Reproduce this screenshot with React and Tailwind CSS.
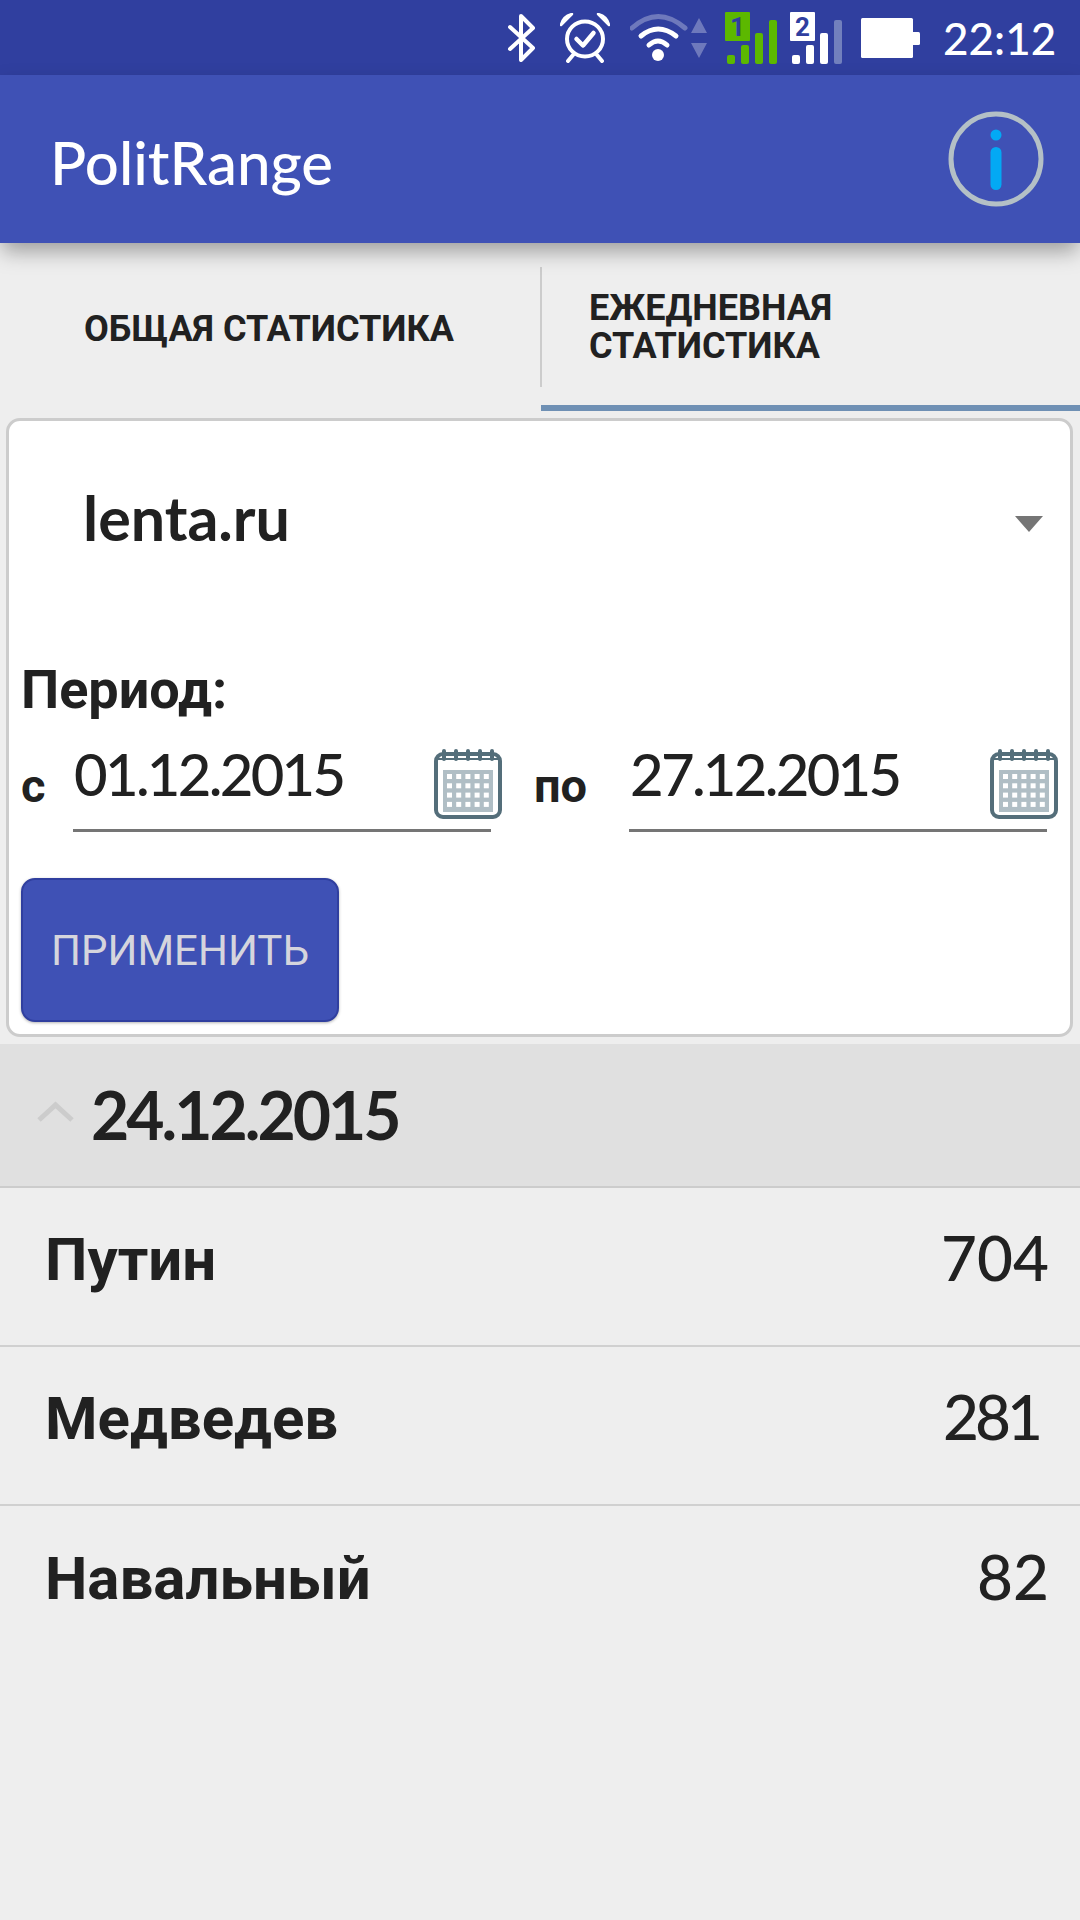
import React from "react";

const BluetoothIcon = () => (
  <svg width="29" height="48" viewBox="0 0 29 48" fill="none" stroke="white" strokeWidth="4" strokeLinecap="round" strokeLinejoin="round">
    <path d="M3 13 L26 34 L14 46 V2 L26 14 L3 35" />
  </svg>
);

const AlarmIcon = () => (
  <svg width="50" height="50" viewBox="0 0 50 50" fill="none" stroke="white" strokeLinecap="round" strokeLinejoin="round">
    <ellipse cx="25" cy="26" rx="18" ry="17.5" strokeWidth="4" />
    <path d="M16.5 26 L23 32.5 L33.5 20" strokeWidth="4.5" />
    <path d="M13 42 L8 48 M37 42 L42 48" strokeWidth="4" />
    <path d="M1 12 Q3 3 12 1 L1 12Z M49 12 Q47 3 38 1 L49 12Z" fill="white" strokeWidth="2.5" />
  </svg>
);

const WifiIcon = () => (
  <svg width="77" height="50" viewBox="0 0 77 50" fill="none" strokeLinecap="round">
    <path d="M2 15 Q28 -8 55 15" stroke="white" strokeOpacity="0.3" strokeWidth="5" />
    <path d="M11 23 Q28 9 46 23" stroke="white" strokeWidth="5" />
    <path d="M19 32 Q28 24 37 32" stroke="white" strokeWidth="5" />
    <circle cx="28" cy="42" r="6" fill="white" />
    <path d="M69 5 L77 20 H61Z" fill="white" fillOpacity="0.3" />
    <path d="M61 30 H77 L69 45Z" fill="white" fillOpacity="0.3" />
  </svg>
);

const SimSignal = ({ num, color, lastDim }) => (
  <svg width="54" height="52" viewBox="0 0 54 52">
    <rect x="0" y="0" width="25" height="29" rx="1" fill={color} />
    <text x="12.5" y="24" textAnchor="middle" fontSize="26" fontWeight="700" fontFamily="Roboto, sans-serif" fill="#303f9f">
      {num}
    </text>
    <rect x="2" y="43" width="8" height="9" rx="2" fill={color} />
    <rect x="16" y="33" width="8" height="19" rx="2" fill={color} />
    <rect x="30" y="21" width="8" height="31" rx="2" fill={color} />
    <rect x="44" y="8" width="8" height="44" rx="2" fill={lastDim ? "#7280bd" : color} />
  </svg>
);

const BatteryIcon = () => (
  <svg width="59" height="40" viewBox="0 0 59 40">
    <rect x="0" y="0" width="52" height="40" rx="1.5" fill="white" />
    <rect x="50" y="14" width="9" height="13" rx="1.5" fill="white" />
  </svg>
);

const InfoIcon = () => (
  <svg width="96" height="96" viewBox="0 0 96 96" fill="none">
    <circle cx="48" cy="48" r="45" stroke="#b4c0c6" strokeWidth="5" />
    <circle cx="48" cy="24" r="5.5" fill="#03a9f4" />
    <rect x="42.5" y="36" width="11" height="43" rx="5.5" fill="#03a9f4" />
  </svg>
);

const CalendarIcon = () => (
  <svg width="68" height="71" viewBox="0 0 68 71" fill="none">
    <rect x="2" y="6" width="64" height="63" rx="7" fill="white" stroke="#546e7a" strokeWidth="4" />
    <path d="M10 3 V11 M22 3 V11 M34 3 V11 M46 3 V11 M58 3 V11" stroke="#546e7a" strokeWidth="4" strokeLinecap="round" />
    <path d="M4 11 H64" stroke="#546e7a" strokeWidth="2" />
    <rect x="9" y="22" width="50" height="42" fill="#b0bec5" />
    {[0, 1, 2, 3].map((r) =>
      [0, 1, 2, 3, 4].map((c) => (
        <rect key={`${r}-${c}`} x={13 + c * 9.2} y={26 + r * 9.3} width="5" height="5" fill="white" />
      ))
    )}
  </svg>
);

const DateField = ({ value }) => (
  <div className="flex items-start justify-between border-b-[3px] border-[#757575] h-[93px] w-[418px]">
    <span className="font-['Lato',sans-serif] font-medium text-[58px] leading-[70px] text-[#212121] tracking-[-2.7px] pl-[1px]">{value}</span>
    <div className="-mr-[11px] mt-[9px]">
      <CalendarIcon />
    </div>
  </div>
);

const rows = [
  { name: "Путин", count: "704", pr: "pr-[31px]", track: "" },
  { name: "Медведев", count: "281", pr: "pr-[41px]", track: "tracking-[-4px]" },
  { name: "Навальный", count: "82", pr: "pr-[31px]", track: "" },
];

export default function App() {
  return (
    <div className="w-[1080px] h-[1920px] bg-[#eeeeee] overflow-hidden font-['Roboto',sans-serif] text-[#212121]">
      <div className="h-[75px] bg-[#303f9f] flex items-center pl-[507px]">
        <BluetoothIcon />
        <div className="ml-[24px]"><AlarmIcon /></div>
        <div className="ml-[20px]"><WifiIcon /></div>
        <div className="ml-[18px]"><SimSignal num="1" color="#5cb800" /></div>
        <div className="ml-[11px]"><SimSignal num="2" color="#ffffff" lastDim /></div>
        <div className="ml-[17px]"><BatteryIcon /></div>
        <span className="ml-[23px] font-['Lato',sans-serif] font-medium text-[44px] leading-none text-white">22:12</span>
      </div>

      <div className="relative z-10 h-[168px] bg-[#3f51b5] flex items-center justify-between pl-[50px] pr-[36px] shadow-[0_10px_20px_-2px_rgba(0,0,0,0.35)]">
        <span className="font-['Lato',sans-serif] font-medium text-[60px] leading-none text-white mt-[6px]">PolitRange</span>
        <InfoIcon />
      </div>

      <div className="flex h-[168px]">
        <div className="w-[540px] flex items-center pl-[84px] mt-[4px]">
          <span className="text-[36px] font-bold leading-none">ОБЩАЯ СТАТИСТИКА</span>
        </div>
        <div className="flex-1 flex flex-col">
          <div className="flex flex-1 items-center mt-[24px] border-l-[2px] border-[#cccccc] mb-[18px] pl-[47px]">
            <span className="text-[36px] font-bold leading-[38px] w-[300px]">ЕЖЕДНЕВНАЯ СТАТИСТИКА</span>
          </div>
          <div className="h-[6px] bg-[#6f90b4] ml-[1px]" />
        </div>
      </div>

      <div className="mt-[7px] ml-[6px] w-[1067px] h-[619px] bg-white border-[3px] border-[#cccccc] rounded-[14px] px-[12px]">
        <div className="flex items-center justify-between h-[206px] pl-[62px] pr-[15px]">
          <span className="font-['Lato',sans-serif] font-bold text-[61px] leading-none mb-[14px]">lenta.ru</span>
          <svg width="28" height="16" viewBox="0 0 28 16">
            <path d="M0 0 H28 L14 16Z" fill="#757575" />
          </svg>
        </div>
        <div className="text-[54px] font-bold leading-[60px] mt-[33px]">Период:</div>
        <div className="flex items-end mt-[19px]">
          <span className="text-[47px] font-bold leading-[60px] w-[52px] mb-[16px]">с</span>
          <DateField value="01.12.2015" />
          <span className="text-[47px] font-bold leading-[60px] w-[138px] pl-[43px] mb-[16px]">по</span>
          <DateField value="27.12.2015" />
        </div>
        <button className="mt-[46px] w-[318px] h-[144px] bg-[#3f51b5] border-[2px] border-[#303f9f] rounded-[14px] text-[42px] text-[#d5d5dd] shadow-[0_1px_3px_rgba(0,0,0,0.3)]">
          ПРИМЕНИТЬ
        </button>
      </div>

      <div className="mt-[7px] h-[144px] bg-[#e0e0e0] border-b-[2px] border-[#cccccc] flex items-center pl-[37px]">
        <svg width="37" height="21" viewBox="0 0 37 21" fill="none" className="-mt-[8px]">
          <path d="M2 19 L18.5 4 L35 19" stroke="#cccccc" strokeWidth="5" />
        </svg>
        <span className="ml-[17px] font-['Lato',sans-serif] font-bold text-[66px] leading-none tracking-[-3px]">24.12.2015</span>
      </div>

      {rows.map((row) => (
        <div key={row.name} className={`h-[159px] border-b-[2px] border-[#d0d0d0] last:border-b-0 flex items-center justify-between pl-[45px] ${row.pr}`}>
          <span className="text-[60px] font-bold leading-none mb-[14px]">{row.name}</span>
          <span className={`font-['Lato',sans-serif] font-medium text-[62px] leading-none mb-[20px] ${row.track}`}>{row.count}</span>
        </div>
      ))}
    </div>
  );
}
